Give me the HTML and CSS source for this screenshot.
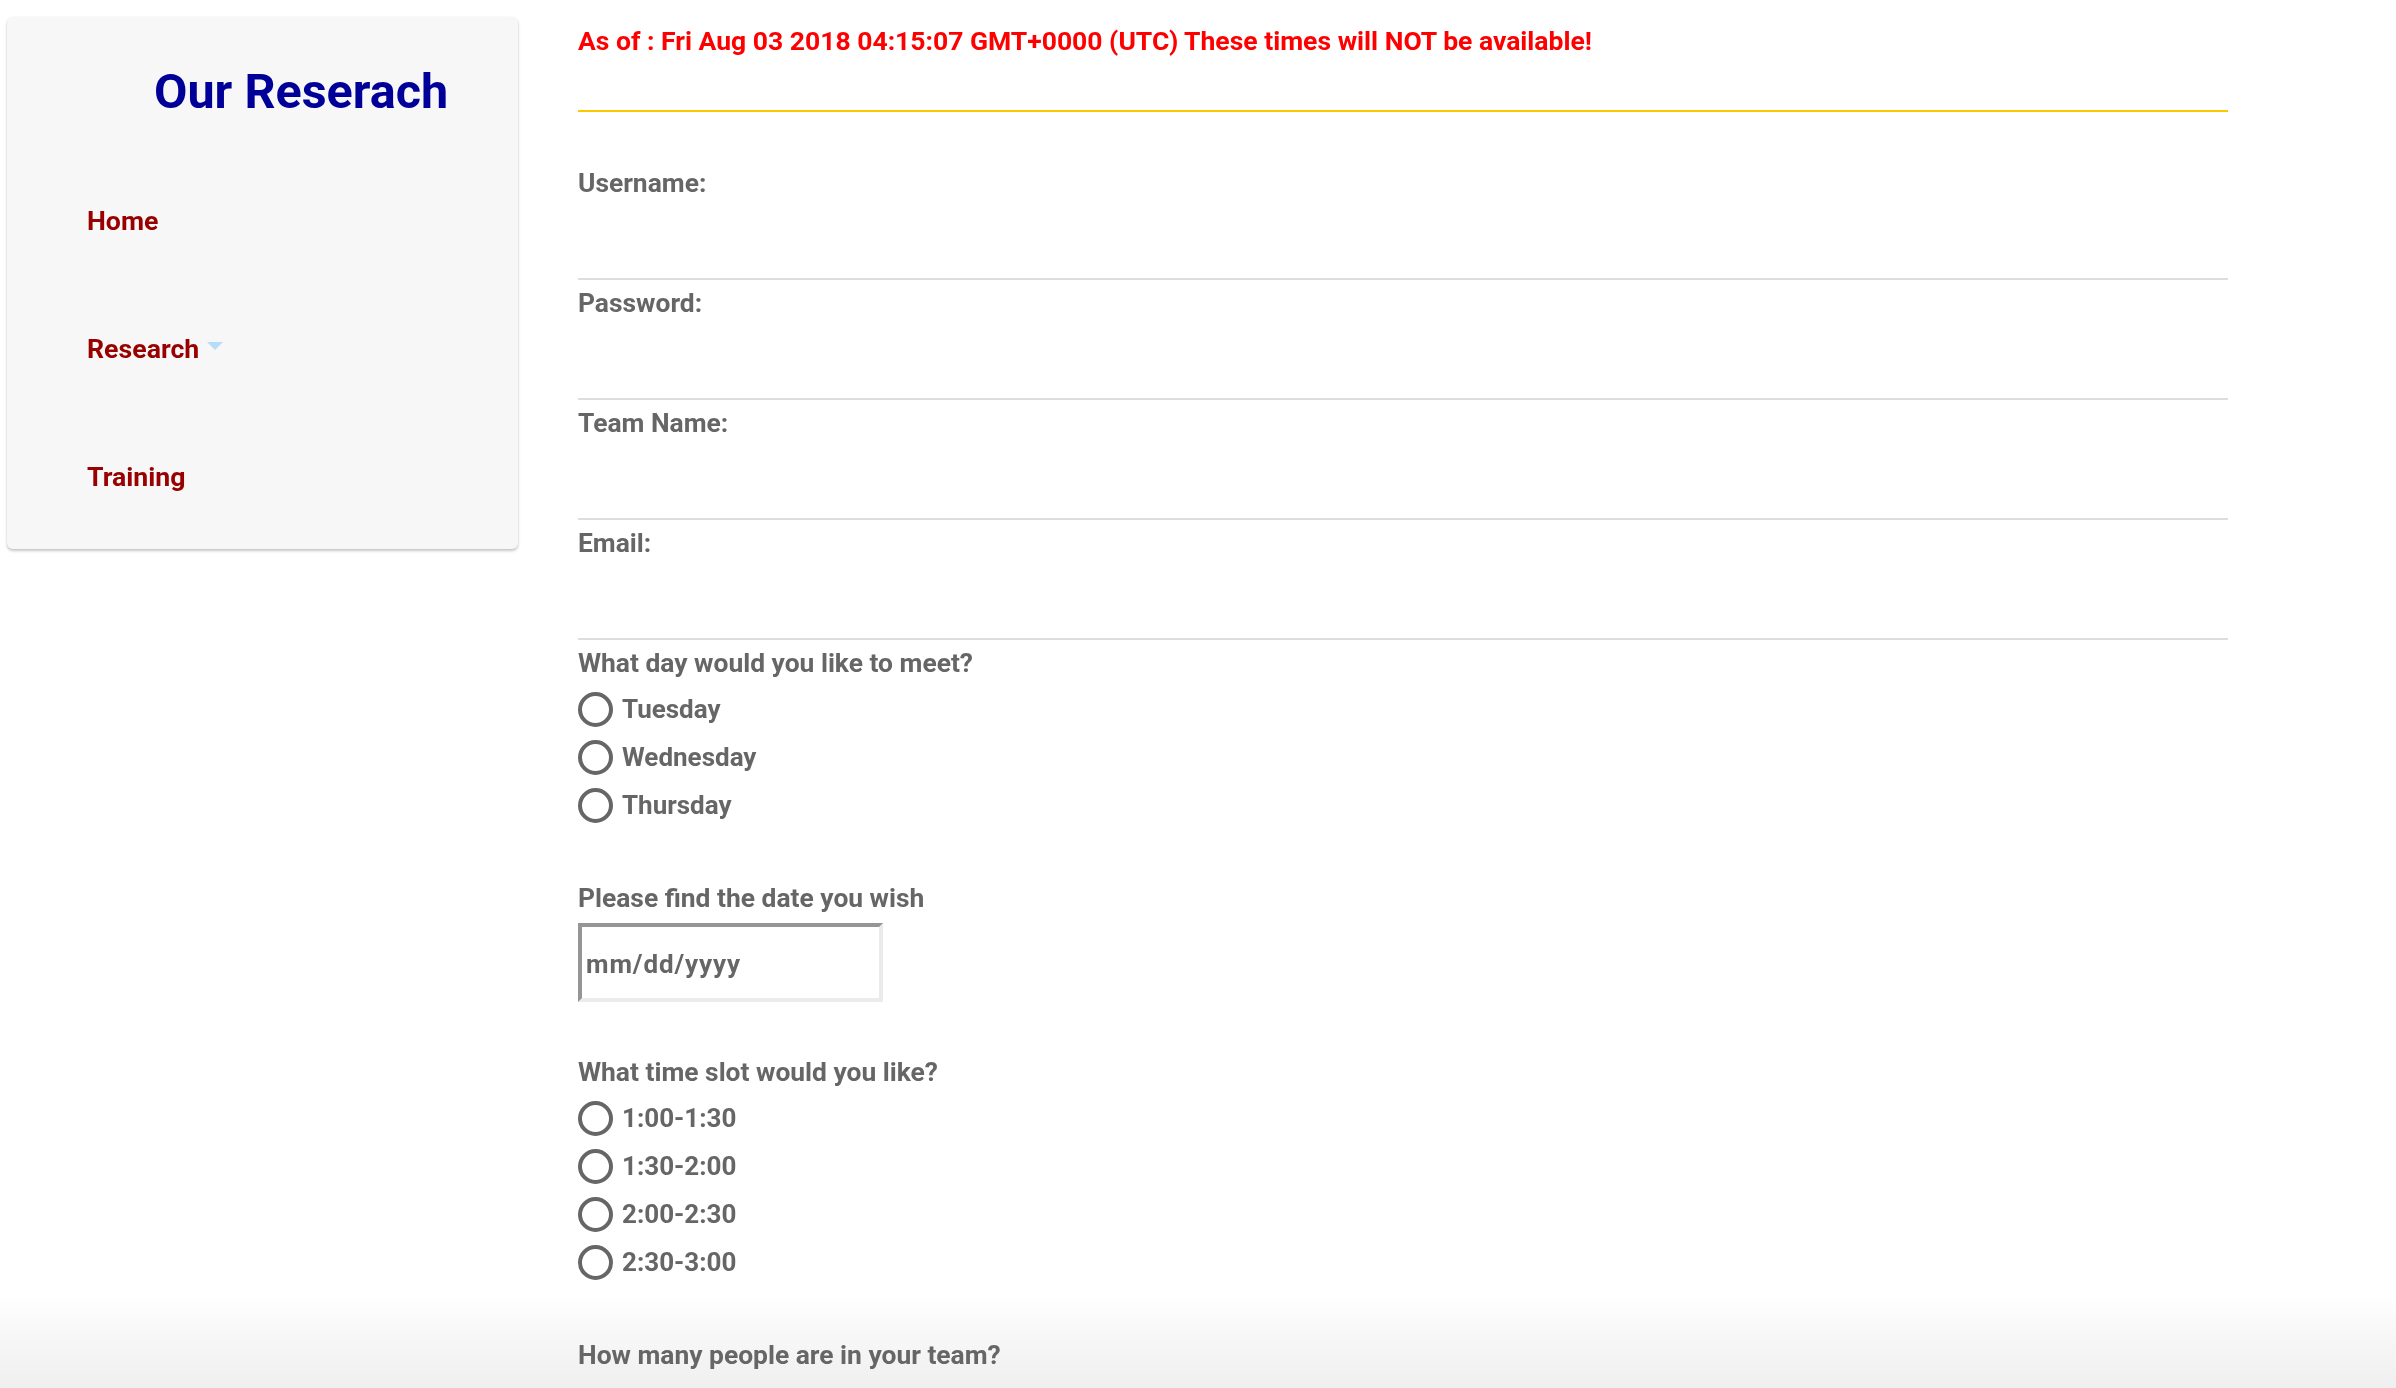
FILE: index.html
```html
<!DOCTYPE html>
<html lang="en">
<head>
<meta charset="utf-8">
<title>Our Reserach</title>
<link rel="stylesheet" href="styles.css">
</head>
<body>
<div class="page">
  <aside class="sidebar">
    <h1 class="brand">Our Reserach</h1>
    <nav class="nav">
      <a class="nav-link" href="#">Home</a>
      <a class="nav-link" href="#">Research<span class="caret"></span></a>
      <a class="nav-link" href="#">Training</a>
    </nav>
  </aside>
  <main class="content">
    <p class="notice">As of : Fri Aug 03 2018 04:15:07 GMT+0000 (UTC) These times will NOT be available!</p>
    <form class="form">
      <div class="field">
        <label class="label">Username:</label>
        <input class="line-input" type="text">
      </div>
      <div class="field">
        <label class="label">Password:</label>
        <input class="line-input" type="password">
      </div>
      <div class="field">
        <label class="label">Team Name:</label>
        <input class="line-input" type="text">
      </div>
      <div class="field">
        <label class="label">Email:</label>
        <input class="line-input" type="email">
      </div>

      <div class="group first">
        <div class="label">What day would you like to meet?</div>
        <div class="options">
          <label class="option"><input class="radio" type="radio" name="day"><span>Tuesday</span></label>
          <label class="option"><input class="radio" type="radio" name="day"><span>Wednesday</span></label>
          <label class="option"><input class="radio" type="radio" name="day"><span>Thursday</span></label>
        </div>
      </div>

      <div class="group">
        <div class="label">Please find the date you wish</div>
        <input class="date-input" type="text" placeholder="mm/dd/yyyy">
      </div>

      <div class="group">
        <div class="label">What time slot would you like?</div>
        <div class="options">
          <label class="option"><input class="radio" type="radio" name="slot"><span>1:00-1:30</span></label>
          <label class="option"><input class="radio" type="radio" name="slot"><span>1:30-2:00</span></label>
          <label class="option"><input class="radio" type="radio" name="slot"><span>2:00-2:30</span></label>
          <label class="option"><input class="radio" type="radio" name="slot"><span>2:30-3:00</span></label>
        </div>
      </div>

      <div class="group">
        <div class="label">How many people are in your team?</div>
        <input class="line-input" type="number">
      </div>
    </form>
  </main>
</div>
<div class="fade"></div>
</body>
</html>
```

FILE: styles.css
```css
html {
  background: #ffffff;
}

body {
  margin: 0;
  font-family: Roboto, "Liberation Sans", Arial, sans-serif;
  font-weight: 700;
  color: #666666;
}

.page {
  display: flex;
  align-items: flex-start;
  padding-left: 7px;
}

.sidebar {
  width: 511px;
  margin-top: 17px;
  box-sizing: border-box;
  padding: 47px 0 57px 0;
  background: #f7f7f7;
  border-radius: 6px;
  box-shadow: 0 2px 3px rgba(0, 0, 0, 0.22), 0 0 2px rgba(0, 0, 0, 0.08);
}

.brand {
  margin: 0;
  padding-left: 147px;
  font-size: 48.5px;
  line-height: 56px;
  font-weight: 700;
  color: #000099;
}

.nav {
  display: flex;
  flex-direction: column;
  gap: 98px;
  margin-top: 86px;
  padding-left: 80px;
}

.nav-link {
  display: flex;
  align-items: flex-start;
  font-size: 26.7px;
  line-height: 30px;
  color: #990000;
  text-decoration: none;
}

.caret {
  width: 0;
  height: 0;
  margin-left: 8px;
  margin-top: 8px;
  border-left: 8px solid transparent;
  border-right: 8px solid transparent;
  border-top: 8px solid #b5dcf8;
}

.content {
  width: 1650px;
  margin-left: 60px;
}

.notice {
  margin: 0;
  padding: 24px 0 52px 0;
  font-size: 26.5px;
  line-height: 34px;
  color: #ff0000;
  border-bottom: 2px solid #fcc800;
}

.form {
  margin-top: 48px;
}

.field {
  display: flex;
  flex-direction: column;
  padding-top: 8px;
}

.label {
  display: block;
  font-size: 26.4px;
  line-height: 30px;
  color: #666666;
}

.line-input {
  display: block;
  box-sizing: border-box;
  width: 100%;
  height: 82px;
  margin: 0;
  padding: 0;
  border: none;
  border-bottom: 2px solid #dddddd;
  background: transparent;
  font: inherit;
  outline: none;
}

.group {
  margin-top: 55px;
}

.group.first {
  margin-top: 8px;
}

.options {
  display: flex;
  flex-direction: column;
  margin-top: 6px;
}

.option {
  display: flex;
  align-items: center;
  height: 48px;
  font-size: 26px;
  line-height: 30px;
  color: #666666;
}

.option span {
  margin-top: 2px;
}

.radio {
  appearance: none;
  -webkit-appearance: none;
  box-sizing: border-box;
  width: 35px;
  height: 35px;
  margin: 3px 9px 0 0;
  border: 4px solid #666666;
  border-radius: 50%;
  background: transparent;
  flex: none;
}

.date-input {
  display: block;
  box-sizing: border-box;
  width: 305px;
  height: 79px;
  margin-top: 10px;
  padding: 2px 0 0 4px;
  border: 4px solid;
  border-color: #959595 #ebebeb #ebebeb #959595;
  background: #ffffff;
  font: inherit;
  font-size: 26px;
  letter-spacing: 0.9px;
  color: #666666;
  outline: none;
}

.date-input::placeholder {
  color: #666666;
  opacity: 1;
}

.fade {
  position: fixed;
  left: 0;
  right: 0;
  bottom: 0;
  height: 96px;
  z-index: -1;
  background: linear-gradient(to bottom, rgba(240, 240, 240, 0), #efefef);
}
```
